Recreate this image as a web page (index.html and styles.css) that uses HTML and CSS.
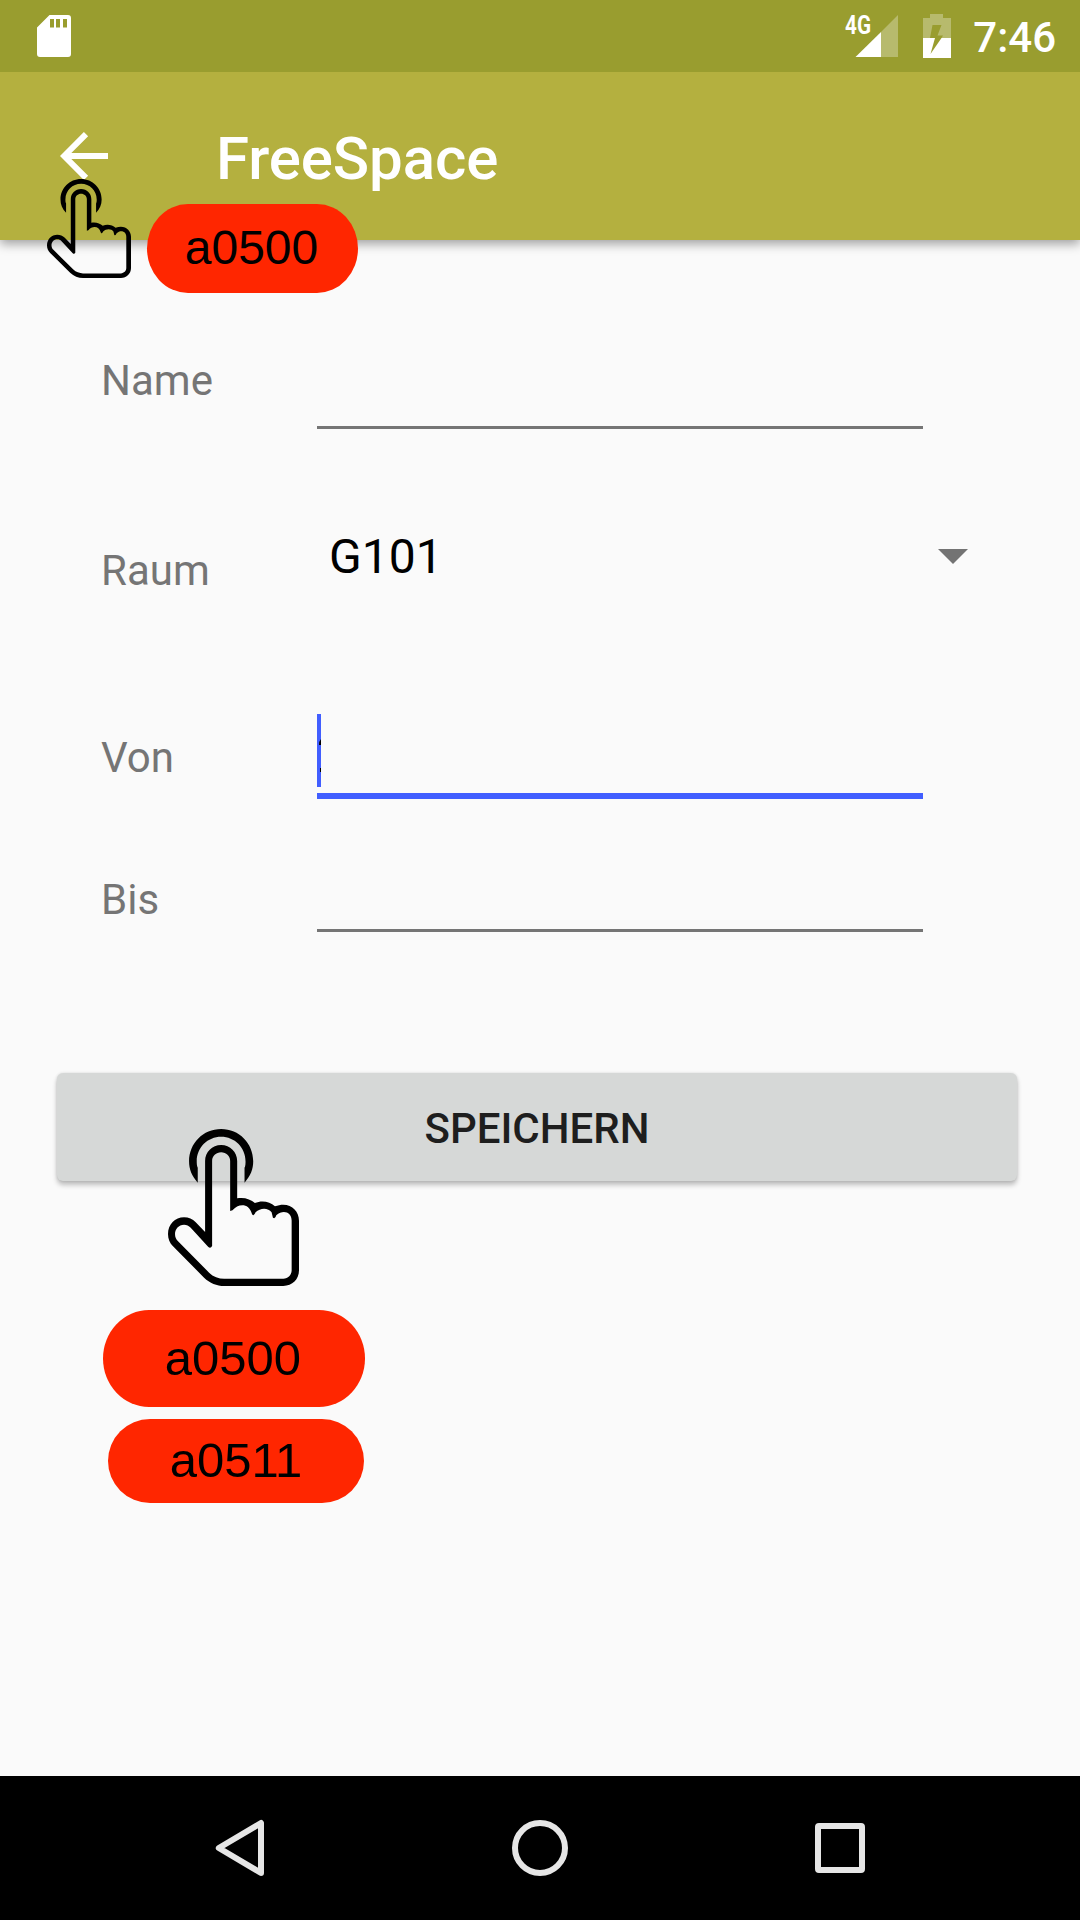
FILE: index.html
```html
<!DOCTYPE html>
<html lang="de">
<head>
<meta charset="utf-8">
<title>FreeSpace</title>
<link rel="stylesheet" href="styles.css">
</head>
<body>
<svg class="defs" aria-hidden="true">
  <symbol id="hand" viewBox="384 207 392 471" preserveAspectRatio="none">
    <path d="M473 368C455 348 447 328 447 304C447 250 489 207 543 207C597 207 639 250 639 304C639 328 631 348 613 368V323C616 318 616 309 616 304C616 262 583 230 543 230C503 230 470 262 470 304C470 309 470 318 473 323Z"/>
    <path fill-rule="evenodd" d="M495 516V303C495 276 516 255 543 255C570 255 591 276 591 303V415C612 411 632 418 644 429C664 420 689 424 704 439C745 423 776 448 776 482V631C776 658 756 678 729 678H552C530 678 509 669 492 653L399 559C389 549 384 536 384 522C384 494 405 472 432 472C446 472 457 477 467 487ZM516 303V558Q511 567 504 560L452 503C446 497 440 494 432 494C416 494 405 507 405 522C405 531 408 538 414 544L507 638C519 650 536 656 552 656H729C743 656 754 645 754 631V482C754 457 729 447 708 466Q705 478 698 473L694 457C684 443 661 442 646 457Q640 472 635 461C626 428 594 430 577 451L570 453V303C570 288 558 277 543 277C528 277 516 288 516 303Z"/>
  </symbol>
</svg>

<header class="status">
  <svg class="sd" viewBox="0 0 34 42"><path fill="#fff" fill-rule="evenodd" d="M12.5 0H31Q34 0 34 3V39Q34 42 31 42H3Q0 42 0 39V12.500ZM13 4V12.500H17V4ZM19 4V12.500H23V4ZM26 4V12.500H30V4Z"/></svg>
  <div class="status-right">
    <svg class="signal" viewBox="0 0 54 44">
      <path fill="#fff" fill-opacity=".3" d="M53 0V42H36V17Z"/>
      <path fill="#fff" d="M36 17V42H10.500Z"/>
      <text class="net" x="0" y="18.500" textLength="26" lengthAdjust="spacingAndGlyphs">4G</text>
    </svg>
    <svg class="battery" viewBox="0 0 28 44">
      <path fill="#fff" fill-opacity=".3" d="M7 0H20V4H28V24H18.500L20 21.500H14.500L18.500 11H9.500L7 24H0V4H7Z"/>
      <path fill="#fff" d="M0 24H12L7.500 40L18.500 24H28V44H0Z"/>
    </svg>
    <span class="time">7:46</span>
  </div>
</header>

<div class="appbar">
  <svg class="back" viewBox="0 0 48 48"><path fill="none" stroke="#fff" stroke-width="6" d="M48 24H5M26 2.100L4.200 24L26 45.900"/></svg>
  <h1 class="title">FreeSpace</h1>
</div>

<main class="form">
  <div class="row row-name"><label class="label">Name</label><div class="field"></div></div>
  <div class="row row-raum"><label class="label">Raum</label>
    <div class="select"><span>G101</span><svg class="caret" viewBox="0 0 30 15"><path fill="#737373" d="M0 0H30L15 15Z"/></svg></div>
  </div>
  <div class="row row-von"><label class="label">Von</label>
    <div class="field active"><svg class="cursor" viewBox="0 0 4 73"><path fill="#415eff" d="M0 0H4V73H0Z"/><path d="M4 25V31H2Q2 27 4 25ZM3 54H4V58H3Z"/></svg></div>
  </div>
  <div class="row row-bis"><label class="label">Bis</label><div class="field"></div></div>
  <button class="save">SPEICHERN</button>
</main>

<nav class="nav">
  <svg viewBox="0 0 60 60"><path fill="none" stroke="#e6e6e6" stroke-width="6" stroke-linejoin="round" d="M51 5V55L8.800 30Z"/></svg>
  <svg viewBox="0 0 60 60"><circle cx="30" cy="30" r="25" fill="none" stroke="#e6e6e6" stroke-width="6"/></svg>
  <svg viewBox="0 0 60 60"><rect x="8" y="8" width="44" height="44" rx="1" fill="none" stroke="#e6e6e6" stroke-width="6" stroke-linejoin="round"/></svg>
</nav>

<svg class="hand hand-back"><use href="#hand"/></svg>
<svg class="hand hand-save"><use href="#hand"/></svg>
<span class="tag tag-back">a0500</span>
<span class="tag tag-save">a0500</span>
<span class="tag tag-next">a0511</span>
</body>
</html>
```
FILE: styles.css
```css
* { box-sizing: border-box; }
body {
  margin: 0;
  width: 1080px;
  height: 1920px;
  position: relative;
  display: flex;
  flex-direction: column;
  overflow: hidden;
  background: #fafafa;
  font-family: Roboto, sans-serif;
}
svg { display: block; flex: none; }
.defs { position: absolute; width: 0; height: 0; }

.status {
  position: relative;
  z-index: 1;
  height: 72px;
  flex: none;
  display: flex;
  justify-content: space-between;
  padding: 0 24px 0 37px;
  background: #999d2f;
  color: #fff;
}
.sd { width: 34px; height: 42px; margin-top: 15px; }
.status-right { display: flex; }
.signal { width: 54px; height: 44px; margin: 15px 24px 0 0; overflow: visible; }
.net { font: 700 25px Roboto, sans-serif; fill: #fff; }
.battery { width: 28px; height: 44px; margin: 14px 22px 0 0; }
.time { font-size: 42px; font-weight: 500; line-height: 50px; margin-top: 13px; }

.appbar {
  height: 168px;
  flex: none;
  display: flex;
  padding-left: 60px;
  background: #b4b03f;
  box-shadow: 0 4px 10px rgba(0, 0, 0, .36);
}
.back { width: 48px; height: 48px; margin-top: 60px; }
.title {
  margin: 51px 0 0 108px;
  font-size: 60px;
  font-weight: 500;
  line-height: 72px;
  letter-spacing: -.1px;
  color: #fff;
}

.form { flex: 1; padding: 116px 63px 0 57px; }
.row { display: grid; grid-template-columns: 216px 1fr; padding-left: 44px; }
.label { font-size: 42px; line-height: 50px; color: #757575; }
.field { width: 606px; border-bottom: 3px solid #757575; }
.field.active { border-bottom: 6px solid #415eff; }
.cursor { width: 4px; height: 73px; }
.row-name { height: 73px; }
.row-raum { height: 68px; margin-top: 99px; }
.row-raum .label { margin-top: 18px; }
.row-von { height: 85px; margin-top: 118px; }
.row-von .label { margin-top: 19px; }
.row-bis { height: 57px; margin-top: 76px; }
.select {
  display: flex;
  justify-content: space-between;
  padding: 1px 49px 0 12px;
  font-size: 48px;
  line-height: 56px;
  color: #000;
}
.caret { width: 30px; height: 15px; margin-top: 20px; }
.save {
  display: block;
  width: 960px;
  height: 108px;
  margin: 141px 0 0;
  padding: 3px 0 0;
  border: 0;
  border-radius: 6px;
  background: #d6d8d7;
  box-shadow: 0 4px 5px rgba(0, 0, 0, .24), 0 0 3px rgba(0, 0, 0, .12);
  font: 500 42px/50px Roboto, sans-serif;
  color: #1e1e1e;
}

.nav {
  height: 144px;
  flex: none;
  display: grid;
  grid-template-columns: repeat(3, 300px);
  justify-content: center;
  place-items: center;
  background: #000;
}
.nav svg { width: 60px; height: 60px; }

/* Touch annotations laid over the screen */
.hand { position: absolute; }
.hand-back { left: 47px; top: 179px; width: 84px; height: 99px; }
.hand-save { left: 168px; top: 1129px; width: 131px; height: 157px; }
.tag {
  position: absolute;
  display: flex;
  justify-content: center;
  background: #ff2600;
  font: 49px/56px "Liberation Sans", sans-serif;
  color: #000;
}
.tag-back { left: 147px; top: 204px; width: 211px; height: 89px; padding: 16px 2px 0 0; font-size: 48px; line-height: 56px; border-radius: 41px / 44.5px; }
.tag-save { left: 103px; top: 1310px; width: 262px; height: 97px; padding: 20px 2px 0 0; border-radius: 46px / 48.500px; }
.tag-next { left: 108px; top: 1419px; width: 256px; height: 84px; padding: 13px 0 0; border-radius: 42px; }
```
